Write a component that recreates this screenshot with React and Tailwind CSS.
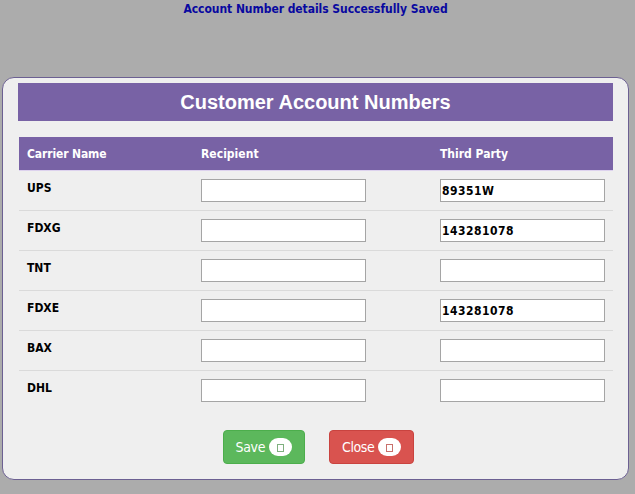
const accounts = [
  { carrier: 'UPS', recipient: '', thirdParty: '89351W' },
  { carrier: 'FDXG', recipient: '', thirdParty: '143281078' },
  { carrier: 'TNT', recipient: '', thirdParty: '' },
  { carrier: 'FDXE', recipient: '', thirdParty: '143281078' },
  { carrier: 'BAX', recipient: '', thirdParty: '' },
  { carrier: 'DHL', recipient: '', thirdParty: '' },
];

function AccountInput({ value, label }) {
  return (
    <input
      aria-label={label}
      defaultValue={value}
      className="block h-[23px] w-[165px] border border-[#a5a5a5] bg-white pl-px text-[12px] font-bold tracking-[0.49px] text-black"
    />
  );
}

function ActionButton({ label, className, glyphClass }) {
  return (
    <button className={`flex h-[34px] items-center gap-1 rounded border text-[14px] text-white ${className}`}>
      <span>{label}</span>
      <span className="flex h-[18px] w-[23px] items-center justify-center rounded-[10px] bg-white">
        <span className={`mt-px h-2 w-[7px] border ${glyphClass}`} />
      </span>
    </button>
  );
}

export default function App() {
  return (
    <div className="h-[494px] w-[635px] overflow-hidden bg-[#acacac] pl-[2px] font-['DejaVu_Sans_Condensed','DejaVu_Sans',sans-serif] text-[12px] text-black">
      <p className="h-[77px] pt-px pr-[6px] text-center text-[12px] leading-4 font-bold tracking-[-0.05px] text-[#0808a0]">
        Account Number details Successfully Saved
      </p>
      <main className="h-[403px] w-[627px] rounded-[12px] border border-[#6c6092] bg-[#efefef] pt-[5px] pr-[15px] pl-[15px]">
        <h1 className="h-[38px] bg-[#7862a5] text-center font-['Liberation_Sans',sans-serif] text-[20px] leading-[38px] font-bold text-white">
          Customer Account Numbers
        </h1>
        <div className="mt-4 ml-px">
          <div className="grid h-[33px] grid-cols-[174px_239px_1fr] items-center bg-[#7862a5] pl-2 font-bold text-white">
            <span className="tracking-[-0.12px]">Carrier Name</span>
            <span className="tracking-[0.03px]">Recipient</span>
            <span>Third Party</span>
          </div>
          {accounts.map((a) => (
            <div
              key={a.carrier}
              className="grid h-10 grid-cols-[174px_239px_1fr] items-start border-t border-[#dadada] pt-2 pl-2 nth-2:border-[#ddd2ee]"
            >
              <span className="pt-px leading-4 font-bold">{a.carrier}</span>
              <AccountInput label={`${a.carrier} recipient`} value={a.recipient} />
              <AccountInput label={`${a.carrier} third party`} value={a.thirdParty} />
            </div>
          ))}
        </div>
        <div className="mt-5 ml-[205px] flex gap-6">
          <ActionButton label="Save" className="w-[82px] border-[#4cae4c] bg-[#5cb85c] pl-[11.5px] tracking-[-0.3px]" glyphClass="border-[#7fb07f]" />
          <ActionButton label="Close" className="w-[85px] border-[#c9433f] bg-[#d9534f] pl-3 tracking-[-0.4px]" glyphClass="border-[#c9706c]" />
        </div>
      </main>
    </div>
  );
}
